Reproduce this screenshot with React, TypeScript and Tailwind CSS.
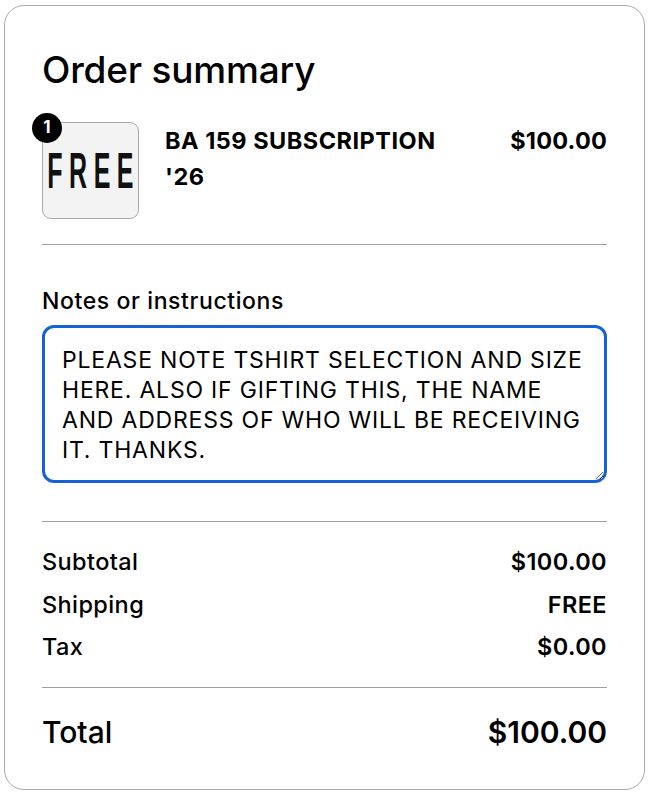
export default function App() {
  const rows = [
    { label: "Subtotal", value: "$100.00" },
    { label: "Shipping", value: "FREE" },
    { label: "Tax", value: "$0.00" },
  ];

  return (
    <div className="w-[650px] min-h-[793px] bg-white pl-[4px] pr-[5px] pt-[5px] pb-[4px] font-['Inter','Liberation_Sans',sans-serif] text-black">
      <div className="rounded-[20px] border border-[#a9a9a9] px-[37px] pt-[42px] pb-[38px]">
        <h1 className="text-[37px] leading-[44px] font-medium tracking-[-0.2px]">Order summary</h1>

        <div className="mt-[30px] flex items-start">
          <div className="relative shrink-0">
            <div className="w-[97px] h-[97px] rounded-[9px] border border-[#a9a9a9] bg-[#f3f3f3] flex items-center justify-center overflow-hidden">
              <span className="font-['Liberation_Sans',sans-serif] font-bold text-[50px] leading-none tracking-[13px] scale-x-[0.5] translate-x-[3px] text-[#111]">
                FREE
              </span>
            </div>
            <span className="absolute -left-[10px] -top-[9px] w-[30px] h-[30px] rounded-full bg-black text-white text-[17px] font-bold flex items-center justify-center">
              1
            </span>
          </div>
          <div className="ml-[26px] flex-1 pt-[1px] text-[23.5px] leading-[36px] font-bold tracking-[0.5px] pr-[46px]">
            BA 159 SUBSCRIPTION '26
          </div>
          <div className="pt-[1px] text-[23.5px] leading-[36px] font-bold tracking-[0.2px]">$100.00</div>
        </div>

        <div className="mt-[25px] h-px bg-[#a0a0a0]" />

        <label className="block mt-[42px] text-[23px] leading-[28px] font-medium tracking-[0.6px]">
          Notes or instructions
        </label>
        <textarea
          readOnly
          defaultValue="PLEASE NOTE TSHIRT SELECTION AND SIZE HERE. ALSO IF GIFTING THIS, THE NAME AND ADDRESS OF WHO WILL BE RECEIVING IT. THANKS."
          className="mt-[10px] block w-full h-[158px] rounded-[12px] border-[3px] border-[#1562d6] pl-[17px] pr-[12px] pt-[17px] pb-[10px] text-[23px] leading-[30px] tracking-[0.8px] outline-none resize-y"
        />

        <div className="mt-[38px] h-px bg-[#a0a0a0]" />

        <div className="mt-[25px] flex flex-col gap-[12.5px]">
          {rows.map((r) => (
            <div key={r.label} className="flex justify-between text-[23.5px] leading-[30px] tracking-[0.4px]">
              <span className="font-medium">{r.label}</span>
              <span className="font-semibold">{r.value}</span>
            </div>
          ))}
        </div>

        <div className="mt-[25px] h-px bg-[#a0a0a0]" />

        <div className="mt-[25px] flex justify-between text-[30px] leading-[38px]">
          <span className="font-medium">Total</span>
          <span className="font-semibold">$100.00</span>
        </div>
      </div>
    </div>
  );
}
